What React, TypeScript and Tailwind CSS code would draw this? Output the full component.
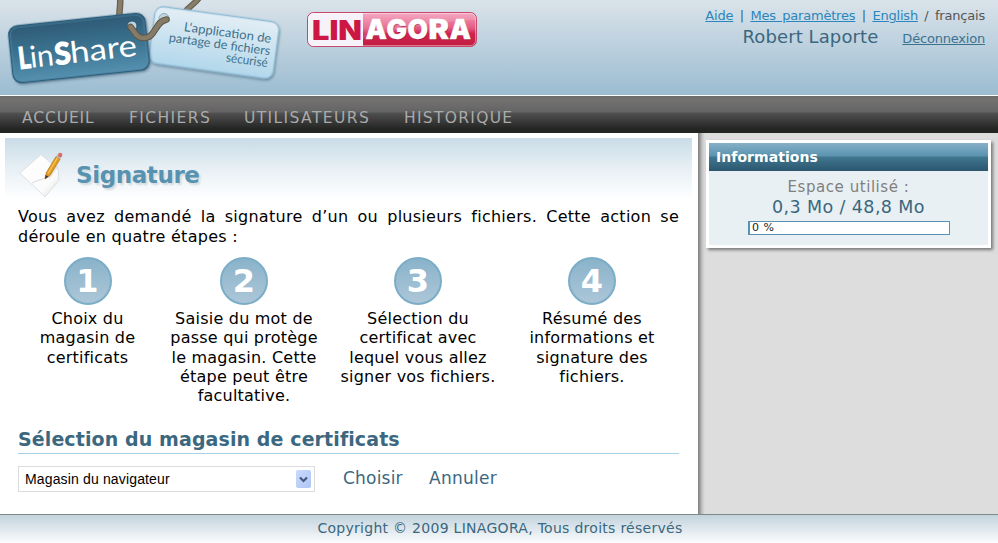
import React from 'react';

function LinShareLogo() {
  return (
    <svg width="290" height="95" viewBox="0 0 290 95" className="block shrink-0">
      <defs>
        <linearGradient id="darkTag" x1="0" y1="0" x2="0" y2="1">
          <stop offset="0" stopColor="#2d5a75" />
          <stop offset="0.5" stopColor="#3b7390" />
          <stop offset="1" stopColor="#5590b0" />
        </linearGradient>
        <linearGradient id="lightTag" x1="0" y1="0" x2="0" y2="1">
          <stop offset="0" stopColor="#e3eef5" />
          <stop offset="1" stopColor="#b2d7eb" />
        </linearGradient>
        <filter id="tagShadow" x="-10%" y="-10%" width="125%" height="135%">
          <feDropShadow dx="1" dy="1.5" stdDeviation="1.2" floodColor="#34566a" floodOpacity="0.55" />
        </filter>
      </defs>
      <path d="M120 -2 C121 5 119 9 119.500 17" fill="none" stroke="#665d4e" strokeWidth="6.500" />
      <path d="M120 -2 C121 5 119 9 119.500 17" fill="none" stroke="#877d69" strokeWidth="4.200" />
      <path d="M199 -2 C195 4 190 5 184 13" fill="none" stroke="#665d4e" strokeWidth="6" />
      <path d="M199 -2 C195 4 190 5 184 13" fill="none" stroke="#877d69" strokeWidth="3.800" />
      <g transform="translate(214 42.500) rotate(7.800)" filter="url(#tagShadow)">
        <rect x="-62.500" y="-28.500" width="125" height="57" rx="8" fill="url(#lightTag)" stroke="#8fbdd6" strokeWidth="1.300" />
      </g>
      <g transform="translate(79 48) rotate(-6)" filter="url(#tagShadow)">
        <rect x="-68.500" y="-28.500" width="137" height="57" rx="9" fill="url(#darkTag)" stroke="#2b5d7b" strokeWidth="1.500" />
        <rect x="-67" y="-27" width="134" height="54" rx="8" fill="none" stroke="#5d93af" strokeWidth="0.800" opacity="0.700" />
      </g>
      <circle cx="132" cy="26" r="5" fill="#c2d4df" stroke="#2a5570" strokeWidth="1" />
      <circle cx="164" cy="18.500" r="5" fill="#c5d5df" stroke="#8aabbd" strokeWidth="1" />
      <path d="M130.500 27 C135 32 136 38 144 38 C156 38 155 21 166.500 19.500" fill="none" stroke="#5f5647" strokeWidth="6.600" strokeLinecap="round" />
      <path d="M130.500 27 C135 32 136 38 144 38 C156 38 155 21 166.500 19.500" fill="none" stroke="#857b66" strokeWidth="4.600" strokeLinecap="round" />
      <g transform="translate(20.500 69) rotate(-6.500)" fill="#fff" fontFamily="Lato, sans-serif" fontSize="30">
        <text x="-1" y="0" fontWeight="700" stroke="#fff" strokeWidth="1.300" textLength="12" lengthAdjust="spacingAndGlyphs">L</text>
        <text x="10.500" y="0" fontWeight="400" textLength="24" lengthAdjust="spacingAndGlyphs">in</text>
        <text x="35.500" y="0" fontWeight="700" stroke="#fff" strokeWidth="1.300" textLength="16" lengthAdjust="spacingAndGlyphs">S</text>
        <text x="51" y="0" fontWeight="400" textLength="67" lengthAdjust="spacingAndGlyphs">hare</text>
      </g>
      <g fill="#3f718c" fontFamily="Lato, sans-serif" fontSize="12.500">
        <text transform="translate(183.500 31) rotate(7.800)" textLength="88" lengthAdjust="spacingAndGlyphs">L‘application de</text>
        <text transform="translate(168.500 41.500) rotate(7.800)" textLength="102" lengthAdjust="spacingAndGlyphs">partage de fichiers</text>
        <text transform="translate(225.500 61.500) rotate(7.800)" textLength="42" lengthAdjust="spacingAndGlyphs">sécurisé</text>
      </g>
    </svg>
  );
}

const plateLetters = [
  { ch: 'A', x: 59.5, w: 21.5 },
  { ch: 'G', x: 80.5, w: 20.5 },
  { ch: 'O', x: 101.5, w: 20.5 },
  { ch: 'R', x: 122.5, w: 20.5 },
  { ch: 'A', x: 143.5, w: 21.5 },
];

function LinagoraLogo() {
  return (
    <svg width="172" height="36" viewBox="0 0 172 36" className="mt-[12px] ml-[16px] block shrink-0">
      <defs>
        <linearGradient id="pinkPlate" x1="0" y1="0" x2="0" y2="1">
          <stop offset="0" stopColor="#f59dba" />
          <stop offset="0.450" stopColor="#e35a83" />
          <stop offset="0.600" stopColor="#cf2450" />
          <stop offset="1" stopColor="#bf1c3e" />
        </linearGradient>
        <clipPath id="plateClip">
          <rect x="1.500" y="0.500" width="169" height="34" rx="6" />
        </clipPath>
      </defs>
      <g clipPath="url(#plateClip)">
        <rect width="172" height="36" fill="url(#pinkPlate)" />
        <rect width="57" height="36" fill="#f7f2fa" />
        <path d="M57 0 H172 V8 C140 9 100 14 57 27 Z" fill="#fff" opacity="0.140" />
      </g>
      <rect x="1.500" y="0.500" width="169" height="34" rx="6" fill="none" stroke="#c5476c" />
      <rect x="2.500" y="1.500" width="167" height="32" rx="5" fill="none" stroke="#fff" opacity="0.400" />
      <g fontFamily="Inter, 'Liberation Sans', sans-serif" fontWeight="900" fontSize="27.500">
        <text x="6" y="27.500" fill="#cc1745" textLength="50" lengthAdjust="spacingAndGlyphs">LIN</text>
        {plateLetters.map((l) => (
          <g key={l.x}>
            <text x={l.x + 0.8} y="28" fill="#7f1030" opacity="0.600" textLength={l.w} lengthAdjust="spacingAndGlyphs">{l.ch}</text>
            <text x={l.x} y="27" fill="#fff" stroke="#fff" strokeWidth="0.400" textLength={l.w} lengthAdjust="spacingAndGlyphs">{l.ch}</text>
          </g>
        ))}
      </g>
    </svg>
  );
}

function EnvelopeIcon() {
  return (
    <svg width="44" height="46" viewBox="0 0 44 46" className="block shrink-0">
      <defs>
        <linearGradient id="paper" x1="0" y1="0" x2="1" y2="1">
          <stop offset="0" stopColor="#ffffff" />
          <stop offset="0.700" stopColor="#fbfbfb" />
          <stop offset="1" stopColor="#dedede" />
        </linearGradient>
      </defs>
      <path d="M22 2.500 L39 17 L40 28 L26 45 L1 21 Z" fill="url(#paper)" stroke="#d3dade" strokeWidth="0.800" />
      <path d="M13 31 C18 28 24 28 27 25" fill="none" stroke="#d6d6d6" strokeWidth="0.900" />
      <path d="M29 26 L38 13" stroke="#dcdcdc" strokeWidth="4" opacity="0.600" />
      <path d="M26 27 L27.200 20.800 L37 4.500 L41.200 7 L31.200 23.300 Z" fill="#e39a20" stroke="#a96c12" strokeWidth="0.600" />
      <path d="M29 21.500 L38.500 5.800" stroke="#f8ca58" strokeWidth="1.200" />
      <path d="M26 27 L26.700 23 L29.300 24.600 Z" fill="#3d3022" />
      <path d="M37 4.500 L38.400 2.300 L42.600 4.800 L41.200 7 Z" fill="#b9b9b9" />
      <circle cx="41.200" cy="3" r="2.200" fill="#dc6c66" />
    </svg>
  );
}

const nav = [
  { label: 'ACCUEIL', cls: 'w-[107px] tracking-[0.9px]' },
  { label: 'FICHIERS', cls: 'w-[115px] tracking-[1.4px]' },
  { label: 'UTILISATEURS', cls: 'w-[160px] tracking-[1.4px]' },
  { label: 'HISTORIQUE', cls: 'w-[130px] tracking-[1.3px]' },
];

const steps = [
  { n: '1', cls: 'ml-[18px] w-[139px]', lines: ['Choix du', 'magasin de', 'certificats'] },
  { n: '2', cls: 'w-[174px]', lines: ['Saisie du mot de', 'passe qui protège', 'le magasin. Cette', 'étape peut être', 'facultative.'] },
  { n: '3', cls: 'w-[174px]', lines: ['Sélection du', 'certificat avec', 'lequel vous allez', 'signer vos fichiers.'] },
  { n: '4', cls: 'w-[174px]', lines: ['Résumé des', 'informations et', 'signature des', 'fichiers.'] },
];

export default function App() {
  return (
    <div className="flex h-[543px] w-[998px] flex-col overflow-hidden bg-white font-['DejaVu_Sans',sans-serif] text-black">
      <header className="flex h-[96px] shrink-0 border-b border-white bg-linear-to-b from-[#dae3ea] to-[#9cbcd1]">
        <LinShareLogo />
        <LinagoraLogo />
        <div className="ml-auto pr-[13px] text-right">
          <div className="mt-[6px] text-[13px] leading-[20px] tracking-[-0.2px] whitespace-pre text-[#3a677e] [word-spacing:2.5px]">
            <a className="text-[#2a86bd] underline">Aide</a>
            {' | '}
            <a className="text-[#2a86bd] underline">Mes paramètres</a>
            {' | '}
            <a className="text-[#2a86bd] underline">English</a>
            <span className="text-[#555]"> / français</span>
          </div>
          <div className="flex items-baseline justify-end leading-[22px]">
            <span className="mr-[24px] text-[18px] tracking-[0.1px] text-[#3a677e]">Robert Laporte</span>
            <a className="text-[13px] tracking-[-0.2px] text-[#3a7290] underline">Déconnexion</a>
          </div>
        </div>
      </header>

      <nav className="flex h-[37px] shrink-0 bg-[linear-gradient(to_bottom,#6d6c6c_0px,#747070_4px,#656565_15px,#666_16px,#505050_17px,#232523_33px,#232523_37px)] pl-[22px] text-[15.500px] leading-[44px] text-[#aaa]">
        {nav.map((item) => (
          <a key={item.label} className={item.cls}>{item.label}</a>
        ))}
      </nav>

      <div className="flex h-[381px] shrink-0">
        <main className="w-[698px] shrink-0 bg-white pt-[5px]">
          <div className="mr-[6px] ml-[5px] flex h-[62px] bg-linear-to-b from-[#c9dce7] via-[#e8f0f5] to-white pt-[14px] pl-[14px]">
            <EnvelopeIcon />
            <h1 className="ml-[13px] text-[23px] leading-[46px] font-bold tracking-[-0.400px] text-[#5793b1] [text-shadow:2px_2px_2px_#d3dade]">Signature</h1>
          </div>
          <div className="pr-[19px] pl-[18px]">
            <p className="mt-[7px] text-justify text-[16px] leading-[20px] tracking-[0.27px]">
              Vous avez demandé la signature d’un ou plusieurs fichiers. Cette action se déroule en quatre étapes :
            </p>
          </div>
          <div className="mt-[10px] flex h-[151px] text-center">
            {steps.map((s) => (
              <div key={s.n} className={`${s.cls} flex shrink-0 flex-col items-center whitespace-nowrap`}>
                <div className="flex size-[48px] items-center justify-center rounded-full border-2 border-[#7cadc7] bg-linear-to-b from-[#89b3ca] to-[#adc6d8] text-[32px] leading-none font-bold text-white">{s.n}</div>
                <div className="mt-[4px] text-[16px] leading-[19.300px] tracking-[0.22px]">
                  {s.lines.map((l) => (
                    <div key={l}>{l}</div>
                  ))}
                </div>
              </div>
            ))}
          </div>
          <h2 className="mt-[17px] mr-[19px] ml-[18px] h-[29px] border-b border-[#a9d1e9] text-[19px] leading-[28px] font-bold tracking-[0.1px] text-[#3b687f]">Sélection du magasin de certificats</h2>
          <div className="mt-[12px] ml-[18px] flex h-[26px] items-center">
            <div className="flex h-[26px] w-[297px] items-center justify-between border border-[#dcdcdc] pr-[3px] pl-[6px] font-['Liberation_Sans',sans-serif] text-[14px] tracking-[0.15px]">
              <span>Magasin du navigateur</span>
              <span className="flex h-[18px] w-[15px] items-center justify-center rounded-[2px] bg-linear-to-br from-[#cbd9fc] to-[#afc6f6]">
                <svg width="9" height="7" viewBox="0 0 9 7">
                  <path d="M1 1.500 L4.500 5 L8 1.500" fill="none" stroke="#44597e" strokeWidth="2.200" />
                </svg>
              </span>
            </div>
            <a className="ml-[28px] w-[86px] text-[17px] tracking-[0.2px] text-[#3b687f]">Choisir</a>
            <a className="text-[17px] tracking-[0.25px] text-[#3b687f]">Annuler</a>
          </div>
        </main>

        <aside className="flex-1 bg-[linear-gradient(to_right,#828282_0px,#999_2px,#c2c2c2_4px,#ddd_7px)] pt-[7px] pl-[8px]">
          <section className="h-[108px] w-[285px] border-[3px] border-white bg-[#e9f0f4] text-center shadow-[2px_2px_3px_#777]">
            <h3 className="h-[28px] bg-[linear-gradient(to_bottom,#86b0c7_0px,#5a93af_13px,#417790_14px,#2c566f_28px)] pl-[7px] text-left text-[14px] leading-[28px] font-bold tracking-[0.05px] text-white">Informations</h3>
            <div className="mt-[6px] text-[15px] leading-[20px] tracking-[0.55px] text-[#808080]">Espace utilisé :</div>
            <div className="text-[17.500px] leading-[21px] tracking-[0.4px] text-[#3a677e]">0,3 Mo / 48,8 Mo</div>
            <div className="mt-[3px] ml-[39px] h-[14px] w-[202px] border border-l-2 border-[#5793b1] bg-white pl-[2px] text-left text-[11px] leading-[12px] text-[#222] [word-spacing:1px]">0 %</div>
          </section>
        </aside>
      </div>

      <footer className="h-[29px] shrink-0 border-t border-[#7f898c] bg-linear-to-b from-[#c3d3dd] to-[#fbfcfd] pl-[2px] text-center text-[14px] leading-[27px] tracking-[0.28px] text-[#3a677e]">
        Copyright © 2009 LINAGORA, Tous droits réservés
      </footer>
    </div>
  );
}
